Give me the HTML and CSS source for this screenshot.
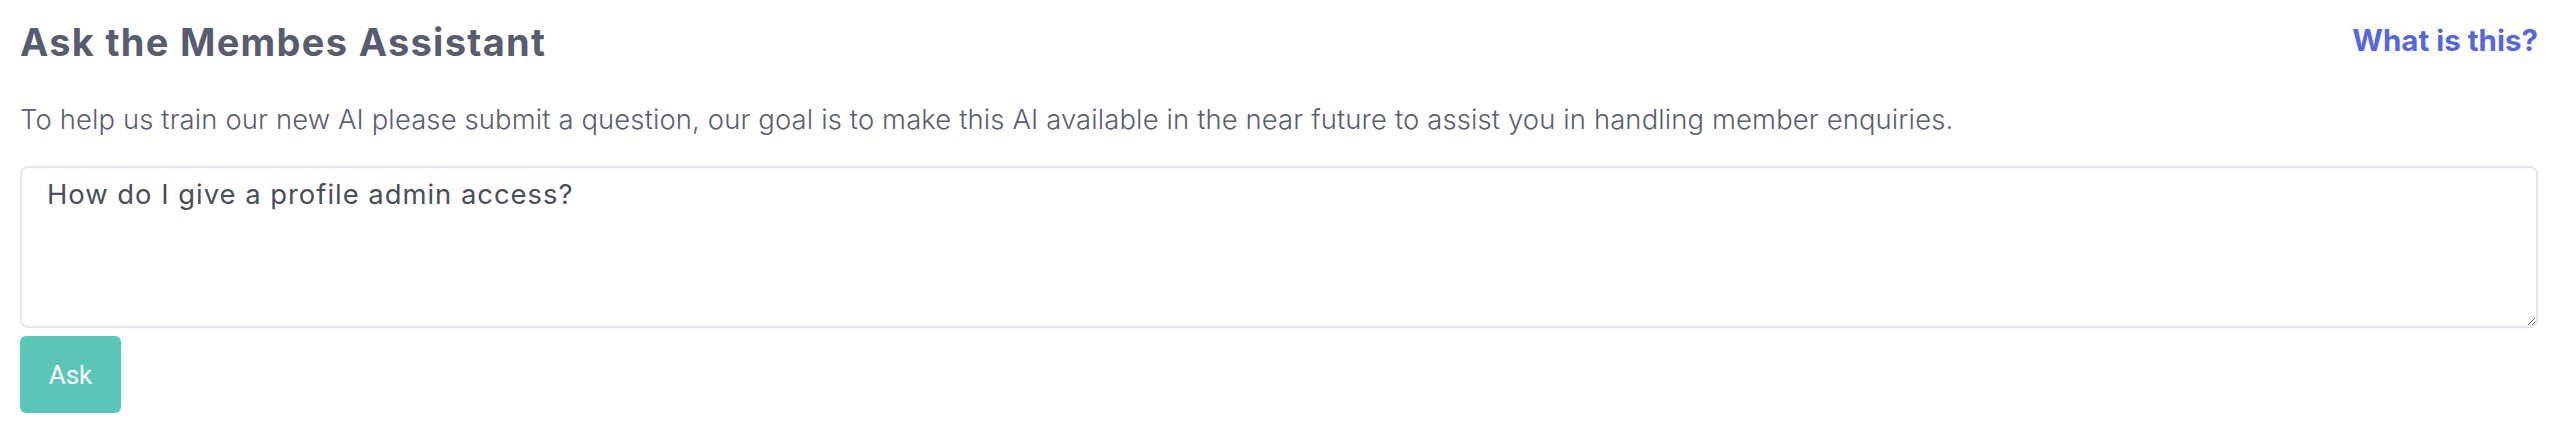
FILE: index.html
```html
<!DOCTYPE html>
<html lang="en">
<head>
<meta charset="utf-8">
<title>Ask the Membes Assistant</title>
<link rel="stylesheet" href="styles.css">
</head>
<body>
<main class="page">
  <header class="head">
    <h1 class="title">Ask the Membes Assistant</h1>
    <a class="help" href="#">What is this?</a>
  </header>
  <p class="intro">To help us train our new AI please submit a question, our goal is to make this AI available in the near future to assist you in handling member enquiries.</p>
  <form class="ask-form">
    <textarea class="question">How do I give a profile admin access?</textarea>
    <button class="ask-btn" type="button">Ask</button>
  </form>
</main>
</body>
</html>
```
FILE: styles.css
```css
html, body {
  margin: 0;
  padding: 0;
  background: #ffffff;
}
.page {
  padding: 18px 36px 0 20px;
  font-family: "Inter", "Noto Sans", sans-serif;
}
.head {
  display: flex;
  justify-content: space-between;
  align-items: flex-start;
}
.title {
  margin: 0;
  font-size: 38px;
  line-height: 48px;
  font-weight: 700;
  letter-spacing: 1.3px;
  color: #585c6f;
}
.help {
  font-size: 29.5px;
  line-height: 44px;
  font-weight: 700;
  color: #5568d9;
  text-decoration: none;
}
.intro {
  margin: 33px 0 0;
  font-size: 27.4px;
  line-height: 40px;
  font-weight: 300;
  letter-spacing: 0.14px;
  color: #5a5e71;
}
.ask-form {
  display: flex;
  flex-direction: column;
  align-items: flex-start;
  gap: 8px;
  margin-top: 27px;
}
.question {
  box-sizing: border-box;
  width: 100%;
  height: 162px;
  margin: 0;
  padding: 9px 25px;
  border: 2px solid #e3e6ed;
  border-radius: 8px;
  font-family: "Inter", "Noto Sans", sans-serif;
  font-size: 27.4px;
  line-height: 34px;
  font-weight: 400;
  letter-spacing: 0.99px;
  color: #4a4e5a;
  resize: both;
  outline: none;
}
.ask-btn {
  display: flex;
  align-items: center;
  justify-content: center;
  width: 101px;
  height: 77px;
  margin: 0;
  padding: 0;
  border: 0;
  border-radius: 6px;
  background: #5bc6b7;
  color: #ffffff;
  font-family: "Roboto", "Liberation Sans", sans-serif;
  font-size: 26px;
  font-weight: 400;
  cursor: pointer;
}
```
